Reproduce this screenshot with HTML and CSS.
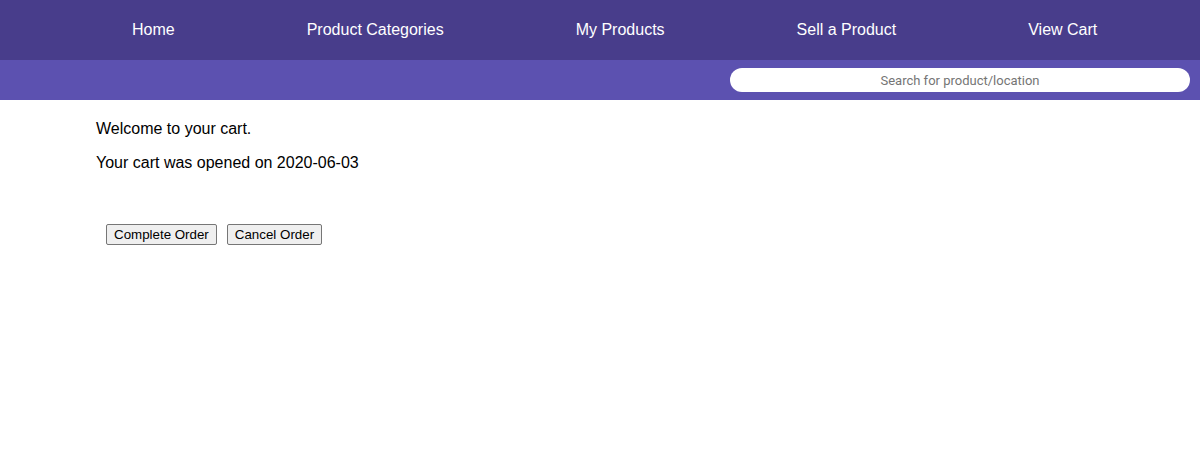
FILE: index.html
```html
<!DOCTYPE html>
<html>
<head>
<meta charset="utf-8">
<link rel="stylesheet" href="styles.css">
</head>
<body>
<header>
  <nav class="nav">
    <a class="nav-link" href="#">Home</a>
    <a class="nav-link" href="#">Product Categories</a>
    <a class="nav-link" href="#">My Products</a>
    <a class="nav-link" href="#">Sell a Product</a>
    <a class="nav-link" href="#">View Cart</a>
  </nav>
  <div class="search-bar">
    <input class="search" type="text" placeholder="Search for product/location">
  </div>
</header>
<main class="content">
  <p>Welcome to your cart.</p>
  <p>Your cart was opened on 2020-06-03</p>
  <div class="actions">
    <button class="btn" type="button">Complete Order</button>
    <button class="btn" type="button">Cancel Order</button>
  </div>
</main>
</body>
</html>
```
FILE: styles.css
```css
html, body {
  margin: 0;
  padding: 0;
  background: #ffffff;
}
body {
  font-family: "Liberation Sans", Arial, sans-serif;
  font-size: 16px;
  color: #000000;
}
.nav {
  display: flex;
  align-items: center;
  height: 60px;
  background: #483d8b;
  padding-left: 66px;
}
.nav-link {
  color: #ffffff;
  text-decoration: none;
  font-size: 16px;
  padding: 0 66px;
  line-height: 18px;
}
.search-bar {
  display: flex;
  justify-content: flex-end;
  align-items: center;
  height: 40px;
  background: #5c51b0;
  padding-right: 10px;
}
.search {
  width: 460px;
  height: 24px;
  box-sizing: border-box;
  border: none;
  border-radius: 12px;
  background: #ffffff;
  text-align: center;
  font-family: Roboto, "Liberation Sans", sans-serif;
  font-size: 13px;
  outline: none;
  padding: 0 10px;
}
.search::placeholder {
  color: #757575;
}
.content {
  padding: 4px 96px 0;
}
.content p {
  margin: 16px 0;
  line-height: 18px;
}
.actions {
  display: flex;
  gap: 10px;
  margin-top: 52px;
  padding-left: 10px;
}
.btn {
  font-family: "Liberation Sans", Arial, sans-serif;
  font-size: 13.333px;
  height: 21px;
  padding: 1px 7px;
  border: 1px solid #767676;
  border-radius: 2px;
  background: #efefef;
  color: #000000;
  line-height: 15px;
}
```
